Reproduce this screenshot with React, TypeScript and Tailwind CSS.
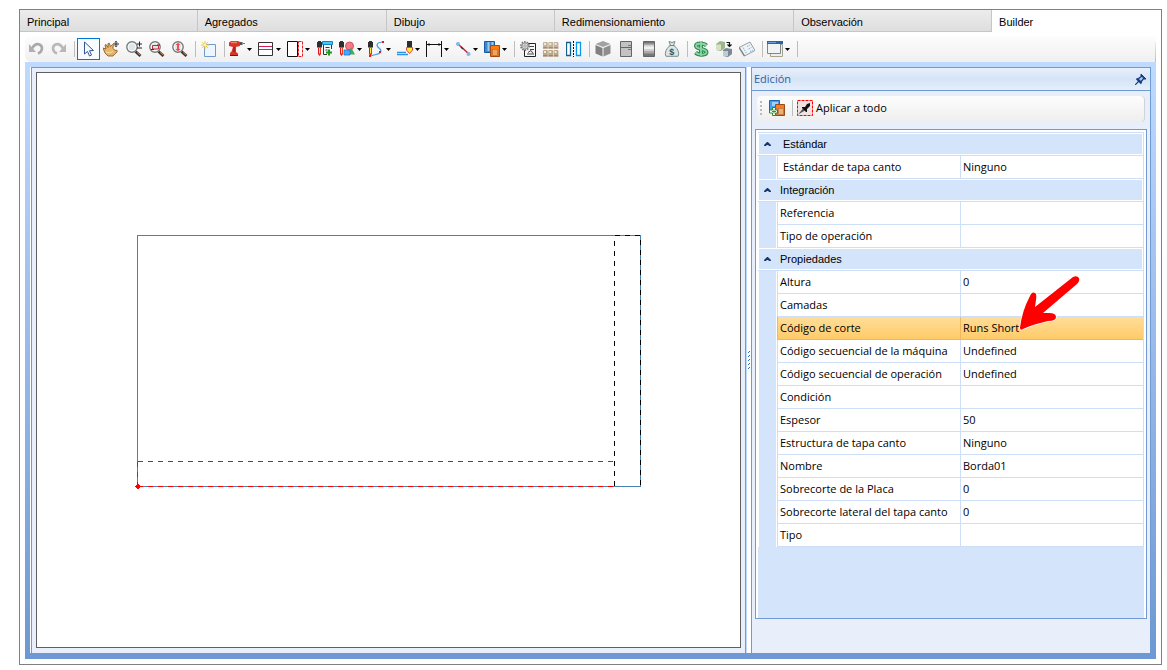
import React from "react";

function Icon({ children }: { children: React.ReactNode }) {
  return (
    <svg viewBox="0 0 16 16" className="size-4 shrink-0" fill="none" aria-hidden="true">
      {children}
    </svg>
  );
}

const Lens = ({ children }: { children?: React.ReactNode }) => (
  <>
    <path d="M9.500 10.500l5 4.500" stroke="#4a3428" strokeWidth="2.800" />
    <path d="M11 11.300l3.400 3" stroke="#b08058" strokeWidth="1" />
    <circle cx="6" cy="6" r="5.200" fill="#dfe5e8" stroke="#77797b" strokeWidth="1.400" />
    <circle cx="6" cy="6" r="3.900" stroke="#fff" strokeWidth="0.800" />
    {children}
  </>
);

const Spindle = () => (
  <>
    <path d="M0 1h1V0h3v1h1v5.500H0z" fill="#2e2e2e" />
    <path d="M1 6.500h3v6.500l-1.500 2L1 13z" fill="#e01818" />
    <path d="M2 7h1.200v5.500H2z" fill="#ffe640" />
  </>
);

const icons = {
  undo: (
    <>
      <path d="M4 7.500C6 4 9 2.500 11.500 3.500c3.500 1.500 3.500 7-1.500 9" stroke="#a9a9a9" strokeWidth="2.600" />
      <path d="M1 3v8h7z" fill="#b0b0b0" />
    </>
  ),
  redo: (
    <>
      <path d="M12 7.500C10 4 7 2.500 4.500 3.500c-3.500 1.500-3.500 7 1.500 9" stroke="#b9b9b9" strokeWidth="2.600" />
      <path d="M15 3v8H8z" fill="#b8b8b8" />
    </>
  ),
  cursor: <path d="M3.500 1v12l3-2.500 2 4.500 2-1-2-4.300 4-.2z" fill="#f4f8ff" stroke="#31598f" />,
  hand: (
    <>
      <path d="M0 7l3 1-1-4 1-.5 2 3 0-4 1.400-.2 1 3.200 2-2 1 .8-.6 3 2.200 2 2 0 .2 1.500-2.200 2L10 15H5L2 12z" fill="#e8b468" stroke="#805020" strokeWidth=".8" />
      <path d="M3 11c2 1 5 1 7-1" stroke="#ffe0a8" />
      <path d="M13 0v6M10 3h6" stroke="#222" />
      <path d="M11.500 1.500L13 0l1.500 1.500M11.500 4.500L13 6l1.500-1.500" stroke="#444" strokeWidth=".7" />
    </>
  ),
  zoom: (
    <Lens>
      <path d="M11 3h5M13.500.5v5M11 7h5" stroke="#222" />
    </Lens>
  ),
  zoomArea: (
    <Lens>
      <path d="M3.500 4.500h6v3.500h-6z" stroke="#c02c38" />
      <path d="M2 8.500h3M8 4h3" stroke="#7a1c1c" />
    </Lens>
  ),
  zoomFit: (
    <Lens>
      <path d="M6 1.500L8.500 4H7v4h1.500L6 10.500 3.500 8H5V4H3.500z" fill="#f05050" />
    </Lens>
  ),
  fresh: (
    <>
      <path d="M3.500 3.500h11v12h-11z" fill="#eef5ff" stroke="#6e9ad0" />
      <path d="M4 0v8M0 4h8M1.200 1.200l5.600 5.600M6.800 1.200L1.200 6.800" stroke="#ecc930" />
      <circle cx="4" cy="4" r="1.500" fill="#fff59a" />
    </>
  ),
  drill: (
    <>
      <path d="M0 1.500L2 0h7l2 1v4L7 6v5l2 1.500V15H1v-3l1.500-1.500L4 6 0 5z" fill="#d8352a" />
      <path d="M2 1.500h6" stroke="#f98068" strokeWidth="1.500" />
      <path d="M5 6v5" stroke="#a81d18" strokeWidth="1.500" />
      <path d="M11 1h2.500v3H11z" fill="#555" />
      <path d="M13.500 2.500H16" stroke="#777" />
      <path d="M1 14.500h8" stroke="#59231f" />
    </>
  ),
  bands: (
    <>
      <path d="M.500 1.500h14v13H.500z" fill="#fff" stroke="#333" />
      <path d="M1 5.500h13M1 8.500h13" stroke="#d52058" />
    </>
  ),
  cut: (
    <>
      <path d="M.500.500h10v15H.500z" fill="#fff" stroke="#111" />
      <path d="M11.500.500h4v15h-4z" fill="#fff" stroke="#e31b23" strokeDasharray="3 1" />
    </>
  ),
  routeAdd: (
    <>
      <Spindle />
      <path d="M5.500.500h10v3h-10z" fill="#40c8f8" stroke="#1682c4" />
      <path d="M6.500 4v9.500H10M14.500 4v4M8.500 6.500h4M8.500 9h2" stroke="#333" />
      <path d="M9 11.500h6M12 8.500v6" stroke="#1e9a1e" strokeWidth="2" />
    </>
  ),
  shapes: (
    <>
      <circle cx="10.500" cy="5" r="4" fill="#f47b86" stroke="#d94f5f" />
      <Spindle />
      <path d="M12 6l4 7.500H9z" fill="#45ad57" />
      <path d="M5 9h6v5H5z" fill="#4aa8ff" stroke="#1873d1" strokeWidth=".8" />
    </>
  ),
  curve: (
    <>
      <Spindle />
      <path d="M15 1C8 1 8 5 11 7c4 3 1 6-3 6.500l-6 1.500" stroke="#3f9be8" strokeWidth="1.200" />
      <path d="M14 0h2v2h-2zM1 14h2v2H1zM11 10h2v2h-2z" fill="#e31b23" />
    </>
  ),
  level: (
    <>
      <path d="M10 0h5v6h-5z" fill="#2e2e2e" />
      <path d="M9.500 6.500h6v2.500l-3 3.500-3-3.500z" fill="#ffeb38" stroke="#d82020" strokeWidth=".8" />
      <path d="M0 11.500h9M0 13.500h11" stroke="#2a94ea" strokeWidth="1.500" />
      <path d="M1 12.500h9" stroke="#a9dbff" />
    </>
  ),
  dimension: (
    <>
      <path d="M.500 0v16M15.500 0v16M1 3.500h14" stroke="#111" />
      <path d="M1 3.500l2.500-1.500v3zM15 3.500l-2.500-1.500v3z" fill="#111" />
    </>
  ),
  line: (
    <>
      <path d="M3 3l11 10" stroke="#d41e34" strokeWidth="1.500" />
      <path d="M6 6l2 2" stroke="#333" strokeWidth="1.500" />
      <circle cx="3" cy="3" r="2" fill="#80b4ec" />
      <circle cx="13.500" cy="13" r="2" fill="#80b4ec" />
    </>
  ),
  boxes: (
    <>
      <path d="M.500.500h10v11H.500z" fill="#3989d5" stroke="#16599d" />
      <path d="M4.500 1v9M8.500 1v3" stroke="#94cbfb" strokeWidth="2" />
      <path d="M6.500 4.500h9v11h-9z" fill="#cf7835" stroke="#a44a10" />
      <path d="M7 5h8v3H7z" fill="#ff7b12" />
      <path d="M9 9h4v5H9z" fill="#f3a45c" />
    </>
  ),
  settings: (
    <>
      <path d="M4.500 2.500h11v13h-11z" fill="#f8f8f8" stroke="#222" />
      <path d="M9 5.500h5M7 13h7M10 8.500h4M8 11.500l3-2 2 3" stroke="#444" />
      <circle cx="5" cy="5" r="4" fill="#e6e6e6" stroke="#777" strokeWidth="1.800" strokeDasharray="1.500 1" />
      <circle cx="5" cy="5" r="3" fill="#e0e0e0" stroke="#999" />
      <circle cx="5" cy="5" r="1.200" fill="#fff" stroke="#777" strokeWidth=".7" />
    </>
  ),
  panels: (
    <>
      {[0, 5.3, 10.600].map((x) => (
        <g key={x}>
          <rect x={x} y="1" width="4.800" height="6" rx="1" fill="#c4b29b" />
          <rect x={x} y="9" width="4.800" height="6" rx="1" fill="#bba587" />
          <path d={`M${x + 1} 2h2v2h-2zM${x + 1} 10h2v2h-2z`} fill="#f2eade" />
          <path d={`M${x} 7h4.800M${x} 15h4.800`} stroke="#80684d" />
        </g>
      ))}
    </>
  ),
  mirror: (
    <>
      <path d="M.500 1.500h4v13h-4z" fill="#fff" stroke="#14608f" strokeWidth="1.300" />
      <path d="M7.500 0v16" stroke="#111" strokeDasharray="2 1" />
      <path d="M10.500 1.500h4v13h-4z" fill="#fff" stroke="#0899ef" strokeWidth="1.300" />
    </>
  ),
  cube: (
    <>
      <path d="M8 0l7.500 3L8 6 .500 3z" fill="#a2a2a2" />
      <path d="M.500 4L7.500 7v8.500l-7-3z" fill="#808080" />
      <path d="M15.500 4l-7 3v8.500l7-3z" fill="#8e8e8e" />
    </>
  ),
  cabinet: (
    <>
      <path d="M2.500.500h11v15h-11z" fill="#c2c2c2" stroke="#666" />
      <path d="M3 6.500h10" stroke="#666" />
      <path d="M10 4.500h3M10 8.500h3" stroke="#777" />
    </>
  ),
  metal: (
    <>
      <path d="M2.500.500h11v15h-11z" fill="#777" stroke="#666" />
      <path d="M3 2.500h10v10H3z" fill="#aaa" />
      <path d="M3 4h10v6H3z" fill="#d0d0d0" />
      <path d="M3 5.500h10v2.500H3z" fill="#f1f1f1" />
    </>
  ),
  bag: (
    <>
      <path d="M5 .500l3 1 3-1L9.500 4.500C13 6 16 12 14 15.300H2C0 12 3 6 6.500 4.500z" fill="#dce4e5" stroke="#7b8c8f" />
      <path d="M5.500 4.500h5" stroke="#728589" />
      <text x="5.300" y="13.500" fontSize="9" fontWeight="bold" fill="#345258" fontFamily="Liberation Sans">$</text>
    </>
  ),
  dollar: (
    <>
      <path d="M13.500 4.500C11 2 3 1.500 3 5s10.500 2.500 10.500 6-8 3.500-11 .500M8 .500v15" stroke="#2c8750" strokeWidth="4" />
      <path d="M13.500 4.500C11 2 3 1.500 3 5s10.500 2.500 10.500 6-8 3.500-11 .500M8 1v14" stroke="#8bd5a4" strokeWidth="1.800" />
    </>
  ),
  convert: (
    <>
      <path d="M0 3l4-3 5 1v6l-4 3-5-1z" fill="#9fb58a" />
      <path d="M0 3.500h5V9H0z" fill="#d5e0c8" />
      <path d="M7 9l3-2 6 1v5l-4 3-5-1z" fill="#7b8992" />
      <path d="M7 10h5v5H7z" fill="#c0cbd2" />
      <path d="M10.500 1.500h3v3M11.500 3.500l2 2 2-2" stroke="#111" strokeWidth="1.200" />
    </>
  ),
  note: (
    <>
      <path d="M0 6.500L11 1l5 8.500L5.500 15z" fill="#eef3f6" stroke="#969fa6" />
      <path d="M0 6.500L5.500 15" stroke="#888" strokeWidth="1.400" />
      <path d="M4 6.500l3.500 6M8 5.500l3-1.500M9.500 8l3-1.500M11 10.500l3-1.500" stroke="#7cb1df" strokeDasharray="1.500 1" />
    </>
  ),
  windows: (
    <>
      <path d="M3.500 3.500h12v12h-12z" fill="#eee" stroke="#a5a58f" />
      <path d="M.500.500h13v12H.500z" fill="#f1f2f2" stroke="#7d8792" />
      <path d="M0 0h16v3H0z" fill="#2864ae" />
      <path d="M1 1.500h8" stroke="#70a1dc" />
    </>
  ),
};

type IconName = keyof typeof icons;
type Tool = { icon: IconName; label: string; menu?: boolean; active?: boolean } | null;

const tools: Tool[] = [
  { icon: "undo", label: "Deshacer" },
  { icon: "redo", label: "Rehacer" },
  null,
  { icon: "cursor", label: "Seleccionar", active: true },
  { icon: "hand", label: "Mover vista" },
  { icon: "zoom", label: "Zoom" },
  { icon: "zoomArea", label: "Zoom de área" },
  { icon: "zoomFit", label: "Zoom total" },
  null,
  { icon: "fresh", label: "Nuevo" },
  null,
  { icon: "drill", label: "Taladro", menu: true },
  { icon: "bands", label: "Ranura", menu: true },
  { icon: "cut", label: "Tapa canto", menu: true },
  { icon: "routeAdd", label: "Agregar fresado" },
  { icon: "shapes", label: "Formas", menu: true },
  { icon: "curve", label: "Curva", menu: true },
  { icon: "level", label: "Rebaje", menu: true },
  { icon: "dimension", label: "Cota", menu: true },
  { icon: "line", label: "Línea", menu: true },
  { icon: "boxes", label: "Piezas", menu: true },
  null,
  { icon: "settings", label: "Configurar" },
  { icon: "panels", label: "Paneles" },
  { icon: "mirror", label: "Espejo" },
  null,
  { icon: "cube", label: "Vista 3D" },
  { icon: "cabinet", label: "Módulo" },
  { icon: "metal", label: "Material" },
  { icon: "bag", label: "Costo" },
  null,
  { icon: "dollar", label: "Precio" },
  { icon: "convert", label: "Convertir" },
  { icon: "note", label: "Notas" },
  null,
  { icon: "windows", label: "Ventanas", menu: true },
  null,
];

const tabs = [
  { label: "Principal", size: "grow-[177]" },
  { label: "Agregados", size: "grow-[189]" },
  { label: "Dibujo", size: "grow-[167]" },
  { label: "Redimensionamiento", size: "grow-[241]" },
  { label: "Observación", size: "grow-[198]" },
  { label: "Builder", size: "grow-[168]", active: true },
];

type Property = { name: string; value: string; selected?: boolean; indent?: boolean };
const groups: { title: string; indent?: boolean; rows: Property[] }[] = [
  {
    title: "Estándar",
    indent: true,
    rows: [{ name: "Estándar de tapa canto", value: "Ninguno", indent: true }],
  },
  {
    title: "Integración",
    rows: [
      { name: "Referencia", value: "" },
      { name: "Tipo de operación", value: "" },
    ],
  },
  {
    title: "Propiedades",
    rows: [
      { name: "Altura", value: "0" },
      { name: "Camadas", value: "" },
      { name: "Código de corte", value: "Runs Short", selected: true },
      { name: "Código secuencial de la máquina", value: "Undefined" },
      { name: "Código secuencial de operación", value: "Undefined" },
      { name: "Condición", value: "" },
      { name: "Espesor", value: "50" },
      { name: "Estructura de tapa canto", value: "Ninguno" },
      { name: "Nombre", value: "Borda01" },
      { name: "Sobrecorte de la Placa", value: "0" },
      { name: "Sobrecorte lateral del tapa canto", value: "0" },
      { name: "Tipo", value: "" },
    ],
  },
];

function Toolbar() {
  return (
    <div role="toolbar" aria-label="Herramientas" className="mx-[5px] mt-1 flex h-[26px] items-center rounded-l-md bg-linear-to-b from-[#fdfdfd] to-[#f0f0f0]">
      {tools.map((tool, i) =>
        tool === null ? (
          <span key={i} className="flex w-1.5 shrink-0 justify-center">
            <span className="h-4 w-px bg-[#bdbdbd]" />
          </span>
        ) : (
          <button
            key={i}
            type="button"
            aria-label={tool.label}
            aria-pressed={tool.active}
            className={
              tool.menu
                ? "flex h-[22px] w-[29px] shrink-0 items-center gap-0.5 pl-0.5"
                : tool.active
                  ? "flex h-[22px] w-[23px] shrink-0 items-center justify-center border border-[#0078d7] bg-[#f8fbff]"
                  : "flex h-[22px] w-[23px] shrink-0 items-center pl-[3px]"
            }
          >
            <Icon>{icons[tool.icon]}</Icon>
            {tool.menu && (
              <svg viewBox="0 0 5 3" className="h-[3px] w-[5px] shrink-0" aria-hidden="true">
                <path d="M0 0h5L2.500 3z" fill="#000" />
              </svg>
            )}
          </button>
        ),
      )}
      <span className="ml-auto h-5 w-px shrink-0 self-end bg-linear-to-b from-[#ececec] to-[#bdbdbd]" />
    </div>
  );
}

function Drawing() {
  return (
    <svg width="510" height="258" viewBox="134 231 510 258" fill="none" className="shrink-0" role="img" aria-label="Pieza con tapa cantos" shapeRendering="crispEdges">
      <path d="M137.500 235.500h503v251h-503z" stroke="#4682b4" />
      <path d="M614.500 235.500h26v251M614.500 241v246" stroke="#000" strokeDasharray="5 5" />
      <path d="M138 461.500h476M137.500 461.500v25M138 486.500h476" stroke="#f00" strokeDasharray="5 5" />
      <path d="M136 485h4v3h-4zM137 484h2v5h-2zM135 486h6v1h-6z" fill="#f00" />
    </svg>
  );
}

function Pointer() {
  return (
    <svg width="64" height="58" viewBox="0 0 64 58" className="pointer-events-none absolute -top-[42px] left-[57px] z-10" aria-hidden="true">
      <path
        d="M2 52.500Q4 36 12 21Q14 16 17 18Q19 19 18 25L17 32L55 2Q59 0 61 3Q62 6 59 9L25 38L31 38Q38 38 38 42Q38 46 30 46Q16 49 5 54Q2 56 2 52.500Z"
        fill="#f00"
        stroke="#fff"
        strokeWidth="1.500"
        paintOrder="stroke"
      />
    </svg>
  );
}

function PropertyGrid() {
  return (
    <div className="mx-[3px] mt-[7px] mb-[34px] flex grow flex-col border border-[#6f9ad3] bg-white px-0.5 pt-0.5">
      <div className="grow bg-[#d4e5fb]">
        <table className="w-full table-fixed border-separate border-spacing-0 border-t border-r border-[#cddff6] bg-white text-left">
          <colgroup>
            <col className="w-[19px]" />
            <col />
            <col />
          </colgroup>
          {groups.map((group) => (
            <tbody key={group.title}>
              <tr>
                <th colSpan={3} scope="rowgroup" className="h-[23px] border-b border-[#cddff6] bg-[#d4e5fb] p-0 font-normal shadow-[inset_0_0_0_1px_#ffffff]">
                  <button
                    type="button"
                    aria-expanded="true"
                    className={group.indent ? "flex h-[22px] w-full items-center gap-3 pl-1.5 font-['Liberation_Sans',sans-serif]" : "flex h-[22px] w-full items-center gap-[9px] pl-1.5 font-['Liberation_Sans',sans-serif]"}
                  >
                    <svg viewBox="0 0 7 4" className="h-1 w-[7px]" fill="none" aria-hidden="true">
                      <path d="M.500 4L3.500 1l3 3" stroke="#16346d" strokeWidth="2" />
                    </svg>
                    {group.title}
                  </button>
                </th>
              </tr>
              {group.rows.map((row) => {
                const tone = row.selected
                  ? "bg-linear-to-b from-[#ffdd98] to-[#ffcb68] border-[#efb85a]"
                  : "border-[#cddff6]";
                return (
                  <tr key={row.name}>
                    <td className="border-l border-white bg-[#d4e5fb] p-0 shadow-[inset_-1px_0_0_#ffffff]" />
                    <th scope="row" className={`h-[23px] border-b border-l p-0 leading-4 font-normal whitespace-nowrap ${row.indent ? "pl-[5px]" : "pl-0.5"} ${tone}`}>
                      {row.name}
                    </th>
                    <td className={`relative h-[23px] border-b border-l p-0 pl-0.5 leading-4 ${tone}`}>
                      {row.value}
                      {row.selected && <Pointer />}
                    </td>
                  </tr>
                );
              })}
            </tbody>
          ))}
        </table>
      </div>
    </div>
  );
}

function EditPanel() {
  return (
    <aside className="flex w-[400px] shrink-0 flex-col border border-b-0 border-[#6f9ad3] bg-[#e8effa] font-['Open_Sans',sans-serif] text-[11px] text-black">
      <header className="flex h-[23px] items-center justify-between border-b border-[#6f9ad3] bg-linear-to-b from-[#e9f0fb] via-[#d5e4f6] to-[#e6effb] pr-1 pl-0.5">
        <h2 className="text-[#33609f]">Edición</h2>
        <button type="button" aria-label="Fijar panel">
          <svg viewBox="0 0 11 11" className="size-[11px]" fill="none">
            <path d="M0 11l4-4" stroke="#173f86" strokeWidth="1.200" />
            <path d="M1.500 4.500l5 5" stroke="#173f86" strokeWidth="1.800" />
            <path d="M6 0l5 5-2 0-3-3z" fill="#173f86" stroke="#173f86" />
            <path d="M3 5l4-3 2 2-3 4z" fill="#b9cdec" stroke="#173f86" strokeWidth="1.400" />
          </svg>
        </button>
      </header>
      <div role="toolbar" aria-label="Edición" className="mx-[5px] mt-[5px] flex h-[26px] items-center rounded-sm bg-linear-to-b from-[#fdfdfd] to-[#eeeeee] pb-0.5 pl-[3px] shadow-[inset_-1px_0_0_#d0d3d6]">
        <svg viewBox="0 0 2 14" className="h-3.5 w-0.5" aria-hidden="true">
          <path d="M0 0h2v2H0zM0 4h2v2H0zM0 8h2v2H0zM0 12h2v2H0z" fill="#bbb" />
        </svg>
        <button type="button" aria-label="Agregar tapa canto" className="ml-[7px]">
          <Icon>
            <path d="M.500.500h10v11H.500z" fill="#4b9de7" stroke="#1769af" />
            <path d="M3 2h6v4H3z" fill="#98d0ff" />
            <path d="M6.500 4.500h9v11h-9z" fill="#c77c42" stroke="#964b18" />
            <path d="M7 5h8v3H7z" fill="#ff791a" />
            <path d="M10 9h4v5h-4z" fill="#eab17b" />
            <path d="M3.500 7.500h3v2.500h2v3h-2v2.500h-3V13h-3v-3h3z" fill="#fff" stroke="#2a8a2a" />
            <path d="M5 9.500v4M3 11.500h4" stroke="#2a9b2a" />
          </Icon>
        </button>
        <span className="mr-1 ml-[7px] h-4 w-px bg-[#bdbdbd]" />
        <button type="button" className="flex items-center gap-[3px]">
          <Icon>
            <path d="M.500.500h15v15H.500z" fill="#f1e2e2" stroke="#f00" strokeDasharray="3 1" />
            <path d="M1 14.500l5-6 2 2z" fill="#555" />
            <path d="M5 7l3 0 2-3 3-1 0 3-3 3 0 3-1 0-4-4z" fill="#111" />
          </Icon>
          <span>Aplicar a todo</span>
        </button>
      </div>
      <PropertyGrid />
    </aside>
  );
}

export default function App() {
  return (
    <div className="flex min-h-screen flex-col bg-white pt-[9px] pr-[5px] pb-[5px] pl-[19px] font-['Liberation_Sans',sans-serif] text-[11px] text-black">
      <main className="flex grow flex-col border border-[#808080]">
        <nav role="tablist" className="flex h-[22px]">
          {tabs.map((tab) => (
            <button
              key={tab.label}
              type="button"
              role="tab"
              aria-selected={!!tab.active}
              className={`basis-0 border-b pt-1 pl-[7px] text-left ${tab.size} ${
                tab.active ? "border-white bg-white" : "border-[#c6c6c6] bg-linear-to-b from-[#ececec] to-[#dedede] shadow-[inset_-1px_0_0_#c6c6c6]"
              }`}
            >
              {tab.label}
            </button>
          ))}
        </nav>
        <Toolbar />
        <div className="mx-[5px] mb-[5px] flex grow bg-linear-to-b from-[#bfdaff] to-[#6e98d3] px-[5px] pt-[5px] pb-1.5">
          <section className="flex min-w-0 grow border-l border-white">
            <div className="flex grow border border-b-0 border-[#6f9ad3] bg-[#e8effa] p-1 pb-[5px]">
              <div className="flex grow items-center justify-center border border-[#606060] bg-white">
                <Drawing />
              </div>
            </div>
          </section>
          <div className="flex w-[5px] shrink-0 items-center justify-center border-l border-[#bfdaff] bg-white" role="separator" aria-orientation="vertical">
            <svg viewBox="0 0 2 18" className="h-[18px] w-0.5" shapeRendering="crispEdges">
              <path d="M1 0h1v1H1zM0 1h1v1H0zM1 4h1v1H1zM0 5h1v1H0zM1 8h1v1H1zM0 9h1v1H0zM1 12h1v1H1zM0 13h1v1H0zM1 16h1v1H1zM0 17h1v1H0z" fill="#2870d0" />
            </svg>
          </div>
          <EditPanel />
        </div>
      </main>
    </div>
  );
}
